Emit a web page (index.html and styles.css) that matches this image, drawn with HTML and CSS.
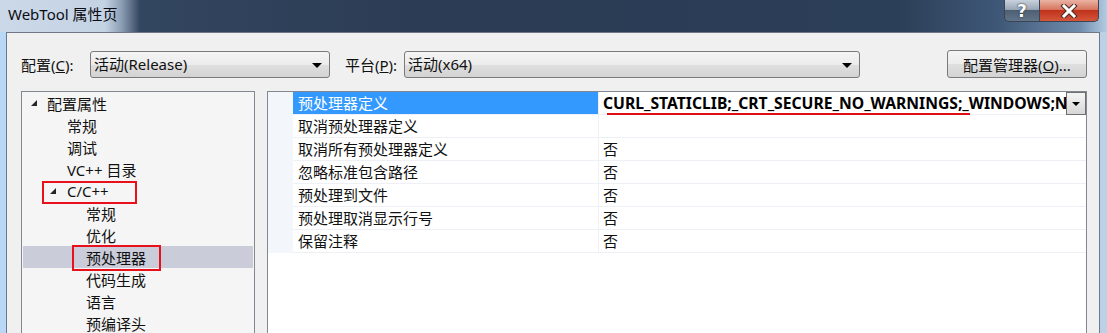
FILE: index.html
```html
<!DOCTYPE html>
<html lang="zh-CN">
<head>
  <meta charset="UTF-8">
  <title>WebTool 属性页</title>
  <link rel="stylesheet" href="styles.css">
</head>
<body>
  <div class="window">
    <div class="titlebar">
      <span class="title">WebTool 属性页</span>
      <div class="caption">
        <span class="cap-btn help">?</span>
        <span class="cap-btn close">
          <svg width="18" height="14" viewBox="0 0 18 14">
            <path d="M4 2 L14 12 M14 2 L4 12" stroke="#4a2a24" stroke-width="5" stroke-linecap="square"/>
            <path d="M4 2 L14 12 M14 2 L4 12" stroke="#fff" stroke-width="3" stroke-linecap="square"/>
          </svg>
        </span>
      </div>
    </div>

    <div class="frame">
      <div class="client">
        <div class="toolbar">
          <label class="lbl">配置(<u>C</u>):</label>
          <div class="combo combo-config">活动(Release)<i class="arrow"></i></div>
          <label class="lbl lbl-platform">平台(<u>P</u>):</label>
          <div class="combo combo-platform">活动(x64)<i class="arrow"></i></div>
          <button class="btn">配置管理器(<u>O</u>)...</button>
        </div>

        <div class="panes">
          <div class="tree">
            <div class="node lv0"><i class="tri"></i>配置属性</div>
            <div class="node lv1">常规</div>
            <div class="node lv1">调试</div>
            <div class="node lv1">VC++ 目录</div>
            <div class="node lv1x"><i class="tri"></i>C/C++<span class="mark mark-cpp"></span></div>
            <div class="node lv2">常规</div>
            <div class="node lv2">优化</div>
            <div class="node lv2 selected">预处理器<span class="mark mark-pre"></span></div>
            <div class="node lv2">代码生成</div>
            <div class="node lv2">语言</div>
            <div class="node lv2">预编译头</div>
          </div>

          <div class="grid">
            <div class="row">
              <div class="gutter"></div>
              <div class="name active">预处理器定义</div>
              <div class="value strong">
                <span class="text">CURL_STATICLIB;_CRT_SECURE_NO_WARNINGS;_WINDOWS;NDEBUG;%(PreprocessorDefinitions)</span>
                <span class="drop"><i class="arrow"></i></span>
                <span class="underline"></span>
              </div>
            </div>
            <div class="row">
              <div class="gutter"></div>
              <div class="name">取消预处理器定义</div>
              <div class="value"></div>
            </div>
            <div class="row">
              <div class="gutter"></div>
              <div class="name">取消所有预处理器定义</div>
              <div class="value">否</div>
            </div>
            <div class="row">
              <div class="gutter"></div>
              <div class="name">忽略标准包含路径</div>
              <div class="value">否</div>
            </div>
            <div class="row">
              <div class="gutter"></div>
              <div class="name">预处理到文件</div>
              <div class="value">否</div>
            </div>
            <div class="row">
              <div class="gutter"></div>
              <div class="name">预处理取消显示行号</div>
              <div class="value">否</div>
            </div>
            <div class="row">
              <div class="gutter"></div>
              <div class="name">保留注释</div>
              <div class="value">否</div>
            </div>
          </div>
        </div>
      </div>
    </div>
  </div>
</body>
</html>
```

FILE: styles.css
```css
body {
  margin: 0;
  overflow: hidden;
  font-family: "Noto Sans", "Noto Sans CJK SC", sans-serif;
  font-size: 15px;
  color: #111;
}
.window {
  width: 1107px;
  height: 333px;
  display: flex;
  flex-direction: column;
}

/* title bar */
.titlebar {
  height: 32px;
  flex: none;
  display: flex;
  justify-content: space-between;
  background: linear-gradient(to right, #cbd8e7 0, #c4d3e4 105px, #8a9cb2 122px, #33465f 140px, #2b3c54 420px, #2c3f58 900px, #3f5878 1000px, #6f8cad 1080px, #b5cbe2 1107px);
}
.title {
  padding: 4px 0 0 8px;
  line-height: 20px;
  color: #0c0c14;
}
.caption {
  display: flex;
  margin-right: 8px;
  height: 22px;
}
.cap-btn {
  display: flex;
  align-items: center;
  justify-content: center;
  border: 1px solid #3a4455;
  border-top: none;
}
.help {
  width: 34px;
  border-radius: 0 0 0 5px;
  border-right: none;
  background: linear-gradient(#c9d2dc, #9aa7b7 45%, #4f5f73 50%, #617488);
  color: #fff;
  font-weight: bold;
  font-size: 17px;
  font-family: "DejaVu Sans", sans-serif;
  text-shadow: 0 0 2px #2a3442, 0 0 1px #2a3442;
}
.close {
  width: 58px;
  border-radius: 0 0 5px 0;
  background: linear-gradient(#eab3a4, #d7775f 45%, #c0321b 50%, #d4563a);
}

/* window frame + client */
.frame {
  flex: 1;
  display: flex;
  padding: 0 7px 0 6px;
  background: linear-gradient(to right, #b9d7f6 0, #b9d7f6 6px, #f0f0f0 6px, #f0f0f0 1100px, #bcd0e6 1100px);
  min-height: 0;
}
.client {
  flex: 1;
  min-width: 0;
  display: flex;
  flex-direction: column;
  background: #f0f0f0;
  border: 1px solid #6e7886;
  border-bottom: none;
  padding: 17px 12px 0 14px;
  min-height: 0;
}

.toolbar {
  display: flex;
  align-items: center;
  height: 28px;
  flex: none;
}
.lbl {
  width: 69px;
  flex: none;
}
.lbl-platform {
  width: 59px;
  margin-left: 15px;
}
.combo {
  position: relative;
  flex: none;
  box-sizing: border-box;
  height: 27px;
  line-height: 25px;
  padding-left: 3px;
  border: 1px solid #7a7a7a;
  border-radius: 3px;
  background: linear-gradient(#f4f4f4, #ececec 50%, #dfdfdf 51%, #d3d3d3);
}
.combo-config {
  width: 240px;
}
.combo-platform {
  width: 456px;
}
.combo .arrow {
  position: absolute;
  right: 7px;
  top: 11px;
}
.arrow {
  display: block;
  width: 0;
  height: 0;
  border-left: 5px solid transparent;
  border-right: 5px solid transparent;
  border-top: 5px solid #000;
}
.btn {
  margin-left: auto;
  flex: none;
  width: 140px;
  height: 28px;
  font: inherit;
  color: #111;
  border: 1px solid #7a7a7a;
  border-radius: 3px;
  background: linear-gradient(#f4f4f4, #ececec 50%, #dfdfdf 51%, #d3d3d3);
  padding: 0;
}

/* panes */
.panes {
  flex: 1;
  display: flex;
  gap: 12px;
  margin-top: 13px;
  min-height: 0;
  min-width: 0;
}
.tree {
  width: 234px;
  flex: none;
  box-sizing: border-box;
  border: 1px solid #828790;
  border-bottom: none;
  background: #f5f5f5;
  padding-top: 0;
}
.node {
  position: relative;
  display: flex;
  align-items: center;
  height: 22px;
}
.lv0 { padding-left: 9px; }
.lv1 { padding-left: 45px; }
.lv1x { padding-left: 28px; }
.lv2 { padding-left: 64px; }
.tri {
  width: 0;
  height: 0;
  border-left: 6px solid transparent;
  border-bottom: 6px solid #262626;
  margin-right: 10px;
}
.lv1x .tri {
  margin-right: 11px;
}
.selected {
  background: #cbccd9;
  margin: 0 1px;
  padding-left: 63px;
}

/* red annotation boxes */
.mark {
  position: absolute;
  box-sizing: border-box;
  border: 2px solid #e8101a;
}
.mark-cpp {
  left: 20px;
  top: 1px;
  width: 95px;
  height: 23px;
}
.mark-pre {
  left: 49px;
  top: -1px;
  width: 89px;
  height: 26px;
}

/* property grid */
.grid {
  flex: 1;
  min-width: 0;
  overflow: hidden;
  border: 1px solid #828790;
  border-bottom: none;
  background: #fff;
}
.row {
  display: flex;
  height: 23px;
}
.gutter {
  width: 25px;
  flex: none;
  background: #f3f6fb;
}
.name, .value {
  box-sizing: border-box;
  height: 23px;
  line-height: 22px;
  border-bottom: 1px solid #eef0f5;
  white-space: nowrap;
}
.name {
  width: 306px;
  flex: none;
  padding-left: 5px;
  border-right: 1px solid #eef0f5;
}
.name.active {
  background: #3399ff;
  color: #fff;
}
.value {
  flex: 1;
  position: relative;
  padding-left: 4px;
  display: flex;
  min-width: 0;
}
.strong {
  font-weight: bold;
  color: #000;
  font-size: 15.7px;
}
.text {
  flex: 1;
  overflow: hidden;
  min-width: 0;
}
.drop {
  width: 20px;
  flex: none;
  box-sizing: border-box;
  height: 23px;
  border: 1px solid #6f6f6f;
  background: linear-gradient(#f4f4f4, #e6e6e6 50%, #d6d6d6);
  display: flex;
  align-items: center;
  justify-content: center;
}
.drop .arrow {
  border-left-width: 4px;
  border-right-width: 4px;
  border-top-width: 4px;
}
.underline {
  position: absolute;
  left: 8px;
  top: 21px;
  width: 363px;
  height: 2px;
  background: #e00d14;
}
```
